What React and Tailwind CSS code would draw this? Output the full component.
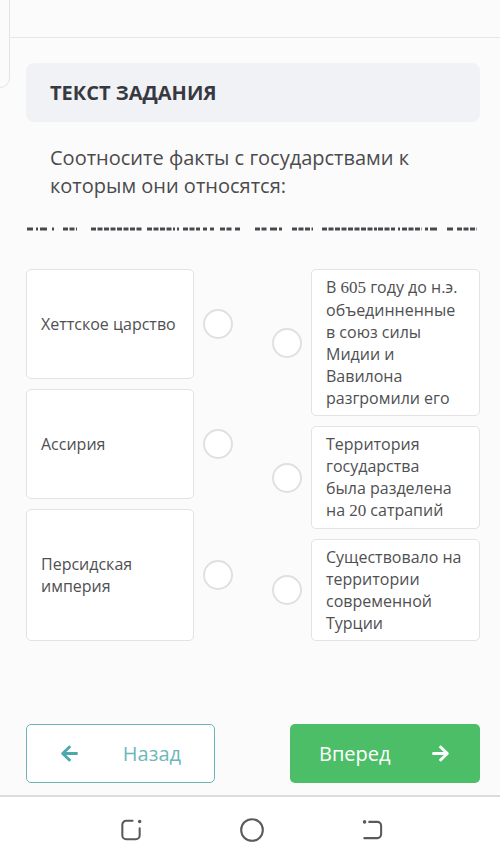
import React from "react";
import { FaArrowLeft, FaArrowRight } from "react-icons/fa";

const leftRuns = [
  [0, 6], [9, 2], [13, 7], [25, 2], [36, 14], [64, 52], [120, 28], [150, 2],
  [156, 17], [176, 4], [183, 4], [193, 13], [208, 5],
];
const rightRuns = [
  [228, 12], [243, 7], [252, 3], [265, 21], [295, 55], [351, 17], [371, 2],
  [375, 20], [398, 3], [403, 7], [420, 6], [430, 20],
];

function DashRule() {
  const runs = [...leftRuns, ...rightRuns];
  return (
    <svg width="450" height="4" viewBox="0 0 450 4" className="block">
      {runs.map(([x, w], i) => (
        <line
          key={i}
          x1={x}
          x2={x + w}
          y1="2"
          y2="2"
          stroke="#46494d"
          strokeWidth="3"
          strokeDasharray={w > 8 ? "5 1.5" : undefined}
        />
      ))}
    </svg>
  );
}

function Radio() {
  return (
    <div className="h-[30px] w-[30px] shrink-0 rounded-full border-[2.5px] border-[#dfe0e1] bg-white" />
  );
}

function Digits({ children }) {
  return <span className="font-['Liberation_Serif',serif] text-[17px]">{children}</span>;
}

const leftItems = [
  { h: "h-[110px]", lines: ["Хеттское царство"] },
  { h: "h-[110px]", lines: ["Ассирия"] },
  { h: "h-[132px]", lines: ["Персидская", "империя"] },
];

const rightItems = [
  {
    lines: [
      <>
        В <Digits>605</Digits> году до н.э.
      </>,
      "объединненные",
      "в союз силы",
      "Мидии и",
      "Вавилона",
      "разгромили его",
    ],
  },
  {
    lines: [
      "Территория",
      "государства",
      "была разделена",
      <>
        на <Digits>20</Digits> сатрапий
      </>,
    ],
  },
  { lines: ["Существовало на", "территории", "современной", "Турции"] },
];

function RecentIcon() {
  return (
    <svg width="26" height="26" viewBox="0 0 24 24" fill="none" stroke="#5a5a5a" strokeWidth="1.9" strokeLinecap="round">
      <path d="M13.5 3.5H7.5a3.5 3.5 0 0 0-3.5 3.5v10A3.5 3.5 0 0 0 7.5 20.5h9a3.5 3.5 0 0 0 3.5-3.5v-6.5" />
      <circle cx="20" cy="4.2" r="0.7" fill="#5a5a5a" />
    </svg>
  );
}

function HomeIcon() {
  return (
    <svg width="26" height="26" viewBox="0 0 24 24" fill="none" stroke="#5a5a5a" strokeWidth="1.9">
      <circle cx="12" cy="12" r="10" />
    </svg>
  );
}

function BackIcon() {
  return (
    <svg width="26" height="26" viewBox="0 0 24 24" fill="none" stroke="#5a5a5a" strokeWidth="1.9" strokeLinecap="round">
      <path d="M8.5 4.5h7.5a3.5 3.5 0 0 1 3.5 3.5v8a3.5 3.5 0 0 1-3.5 3.5H4" />
      <circle cx="4.2" cy="4.5" r="0.7" fill="#5a5a5a" />
    </svg>
  );
}

export default function App() {
  return (
    <div className="relative flex h-[863px] w-[500px] flex-col overflow-hidden bg-[#fbfbfc] font-['Open_Sans',sans-serif]">
      {/* edge of the side panel peeking in at the top left */}
      <div className="absolute left-[-40px] top-[-10px] h-[98px] w-[50px] rounded-br-[10px] border border-[#e4e4e6]" />

      <div className="ml-[9px] h-[38px] shrink-0 border-b border-[#e6e6e8]" />

      <main className="flex flex-1 flex-col pl-[26px] pr-[20px]">
        <div className="mt-[25px] flex h-[59px] items-center rounded-lg bg-[#f1f2f5] px-[24px]">
          <span className="text-[20px] font-bold text-[#363941]">ТЕКСТ ЗАДАНИЯ</span>
        </div>

        <p className="mt-[22px] px-[24px] text-[20px] leading-[28px] text-[#4b4b4d]">
          Соотносите факты с государствами к которым они относятся:
        </p>

        <div className="ml-px mt-[27px]">
          <DashRule />
        </div>

        <div className="mt-[38px] flex justify-between">
          <div className="flex flex-col gap-[10px]">
            {leftItems.map((it, i) => (
              <div key={i} className="flex items-center gap-[9px]">
                <div className={`flex w-[168px] items-center rounded-[5px] border border-[#e3e3e5] bg-white px-[14px] ${it.h}`}>
                  <div className="text-[16px] leading-[22px] text-[#505052]">
                    {it.lines.map((l, j) => (
                      <div key={j} className="whitespace-nowrap">{l}</div>
                    ))}
                  </div>
                </div>
                <Radio />
              </div>
            ))}
          </div>

          <div className="flex flex-col gap-[10px]">
            {rightItems.map((it, i) => (
              <div key={i} className="flex items-center gap-[9px]">
                <Radio />
                <div className="w-[169px] rounded-[5px] border border-[#e3e3e5] bg-white px-[14px] py-[6px]">
                  <div className="text-[16px] leading-[22px] text-[#505052]">
                    {it.lines.map((l, j) => (
                      <div key={j} className="whitespace-nowrap">{l}</div>
                    ))}
                  </div>
                </div>
              </div>
            ))}
          </div>
        </div>

        <div className="mt-[83px] flex justify-between">
          <button className="flex h-[59px] w-[189px] items-center justify-between rounded-[5px] border-[1.5px] border-[#6cb5b7] bg-white px-[33px]">
            <FaArrowLeft className="text-[#4ea8ab]" size={19} />
            <span className="text-[20px] text-[#6db7b9]">Назад</span>
          </button>
          <button className="flex h-[59px] w-[190px] items-center justify-between rounded-[5px] bg-[#4dbe68] pl-[29px] pr-[30px]">
            <span className="text-[20px] text-white">Вперед</span>
            <FaArrowRight className="text-white" size={19} />
          </button>
        </div>
      </main>

      <nav className="flex h-[68px] shrink-0 items-center justify-center gap-[95px] border-t-2 border-[#dcdcde] bg-white pl-[4px]">
        <RecentIcon />
        <HomeIcon />
        <BackIcon />
      </nav>
    </div>
  );
}
